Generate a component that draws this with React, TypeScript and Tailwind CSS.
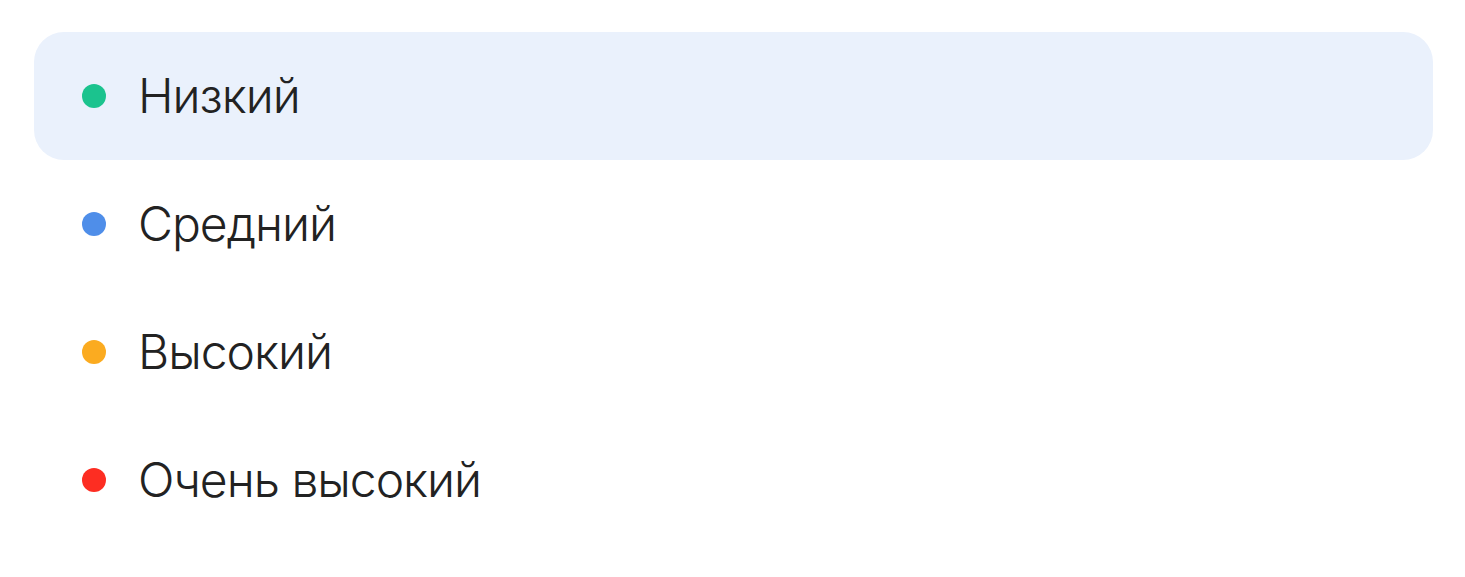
import React from "react";

const items = [
  { label: "Низкий", dot: "bg-[#1bc38e]", active: true },
  { label: "Средний", dot: "bg-[#4f8ee9]", active: false },
  { label: "Высокий", dot: "bg-[#fbab20]", active: false },
  { label: "Очень высокий", dot: "bg-[#fd2d22]", active: false },
];

export default function App() {
  return (
    <div className="w-[1465px] h-[577px] bg-white pt-[32px] pl-[34px] pr-[32px] font-['Inter','Noto_Sans',sans-serif]">
      <div className="flex flex-col">
        {items.map((it) => (
          <div
            key={it.label}
            className={`flex items-center h-[128px] rounded-[30px] pl-[48px] ${
              it.active ? "bg-[#eaf1fc]" : ""
            }`}
          >
            <span className={`w-[24px] h-[24px] rounded-full ${it.dot}`} />
            <span className="ml-[32px] text-[48px] leading-none font-light text-[#222222] tracking-[-1px]">
              {it.label}
            </span>
          </div>
        ))}
      </div>
    </div>
  );
}
